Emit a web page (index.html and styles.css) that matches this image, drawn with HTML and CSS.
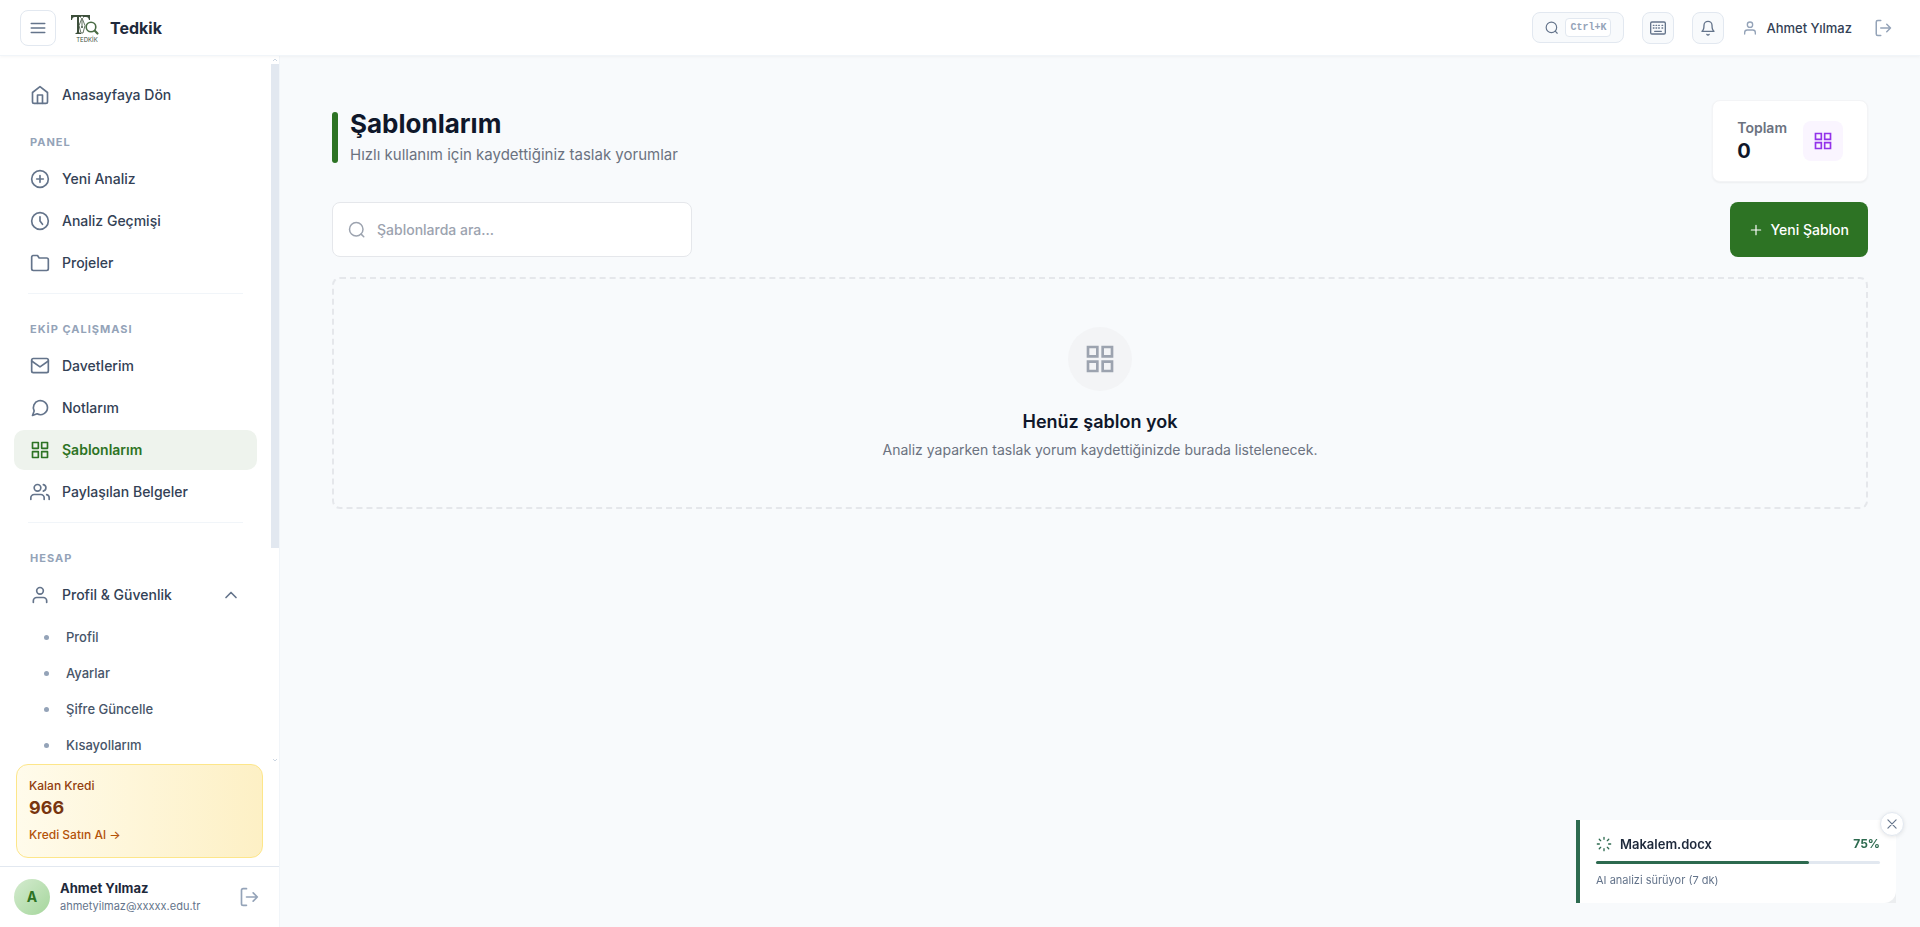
FILE: index.html
```html
<!DOCTYPE html>
<html lang="tr">
<head>
    <meta charset="UTF-8">
    <meta name="viewport" content="width=device-width, initial-scale=1.0">
    <title>Şablonlarım - Tedkik</title>
    <link rel="stylesheet" href="styles.css">
</head>
<body>
    <!-- Shared icons -->
    <svg class="sprite" aria-hidden="true">
        <symbol id="i-grid" viewBox="0 0 24 24"><path d="M3 3h7v7H3zM14 3h7v7h-7zM14 14h7v7h-7zM3 14h7v7H3z"/></symbol>
        <symbol id="i-user" viewBox="0 0 24 24"><path d="M20 21v-2a4 4 0 0 0-4-4H8a4 4 0 0 0-4 4v2"/><circle cx="12" cy="7" r="4"/></symbol>
        <symbol id="i-search" viewBox="0 0 24 24"><circle cx="11" cy="11" r="9"/><path d="m21 21-3.500-3.500"/></symbol>
        <symbol id="i-logout" viewBox="0 0 24 24"><path d="M9 22H5a2 2 0 0 1-2-2V4a2 2 0 0 1 2-2h4M17 17l5-5-5-5M22 12H9"/></symbol>
    </svg>

    <header class="topbar">
        <button class="menu-btn" aria-label="Menü">
            <svg class="icon" width="18" height="18" viewBox="0 0 24 24"><path d="M3 6h18M3 12h18M3 18h18"/></svg>
        </button>
        <a class="brand" href="#">
            <svg class="logo" width="30" height="30" viewBox="0 0 30 30" aria-hidden="true">
                <path fill="#3d4f3b" d="M1 2h19v5h-1c-.4-2-1-3-3-3h-2v1l-2-2-2 2V4h-1v14c0 1.500.6 2 2 2v1H5.500v-1C7 20 7 19.500 7 18V4H5C3 4 2.400 5 2 7H1z"/>
                <path fill="#fff" stroke="#3d4f3b" stroke-width=".8" d="m12 5 3 7.500-2 7.500h-2l-2-7.500z"/>
                <path stroke="#3d4f3b" stroke-width=".8" d="M12 7v6"/>
                <circle cx="12" cy="14" r="1" fill="#3d4f3b"/>
                <circle cx="21" cy="14" r="4.800" fill="none" stroke="#4a6b45" stroke-width="1.600"/>
                <path stroke="#4a6b45" stroke-width="2.200" stroke-linecap="round" d="m24.800 17.800 2.700 2.700"/>
                <text x="17" y="28.500" text-anchor="middle" font-family="Inter, sans-serif" font-size="6" fill="#3d4f3b">TEDKİK</text>
            </svg>
            <span class="brand-name">Tedkik</span>
        </a>
        <div class="topbar-actions">
            <button class="search-btn" aria-label="Ara">
                <svg class="icon" width="14" height="14"><use href="#i-search"/></svg>
                <kbd>Ctrl+K</kbd>
            </button>
            <button class="icon-btn" aria-label="Klavye kısayolları">
                <svg class="icon" width="16" height="16" viewBox="0 0 24 24"><rect x="1" y="3" width="22" height="18" rx="2"/><path d="M5 8h1M9 8h1M13 8h1M18 8h1M5 12h1M9 12h1M13 12h1M18 12h1M7 17h10"/></svg>
            </button>
            <button class="icon-btn" aria-label="Bildirimler">
                <svg class="icon" width="16" height="16" viewBox="0 0 24 24"><path d="M18 8A6 6 0 0 0 6 8c0 7-3 9-3 9h18s-3-2-3-9M13.700 21.500a2 2 0 0 1-3.400 0"/></svg>
            </button>
            <a class="user-link" href="#">
                <svg class="icon" width="16" height="16"><use href="#i-user"/></svg>
                Ahmet Yılmaz
            </a>
            <button class="plain-btn" aria-label="Çıkış yap">
                <svg class="icon" width="18" height="18"><use href="#i-logout"/></svg>
            </button>
        </div>
    </header>

    <div class="layout">
        <aside class="sidebar">
            <div class="sidebar-scroll">
                <nav class="nav">
                    <a class="nav-item" href="#">
                        <svg class="icon" width="20" height="20" viewBox="0 0 24 24"><path d="m3 9 9-7 9 7v11a2 2 0 0 1-2 2H5a2 2 0 0 1-2-2z"/><path d="M9 22V12h6v10"/></svg>
                        Anasayfaya Dön
                    </a>

                    <h2 class="nav-title">PANEL</h2>
                    <a class="nav-item" href="#">
                        <svg class="icon" width="20" height="20" viewBox="0 0 24 24"><circle cx="12" cy="12" r="10"/><path d="M12 8v8M8 12h8"/></svg>
                        Yeni Analiz
                    </a>
                    <a class="nav-item" href="#">
                        <svg class="icon" width="20" height="20" viewBox="0 0 24 24"><circle cx="12" cy="12" r="10"/><path d="M12 7v5l3 4"/></svg>
                        Analiz Geçmişi
                    </a>
                    <a class="nav-item" href="#">
                        <svg class="icon" width="20" height="20" viewBox="0 0 24 24"><path d="M22 19a2 2 0 0 1-2 2H4a2 2 0 0 1-2-2V5a2 2 0 0 1 2-2h5l2 3h9a2 2 0 0 1 2 2z"/></svg>
                        Projeler
                    </a>
                    <hr class="nav-divider">

                    <h2 class="nav-title">EKİP ÇALIŞMASI</h2>
                    <a class="nav-item" href="#">
                        <svg class="icon" width="20" height="20" viewBox="0 0 24 24"><rect x="2" y="3" width="20" height="17" rx="2"/><path d="m2 6 10 7 10-7"/></svg>
                        Davetlerim
                    </a>
                    <a class="nav-item" href="#">
                        <svg class="icon" width="20" height="20" viewBox="0 0 24 24"><path d="M21 11.500a8.500 8.500 0 0 1-12.500 7.500L3 21l2-5.400A8.500 8.500 0 1 1 21 11.500z"/></svg>
                        Notlarım
                    </a>
                    <a class="nav-item active" href="#" aria-current="page">
                        <svg class="icon" width="20" height="20"><use href="#i-grid"/></svg>
                        Şablonlarım
                    </a>
                    <a class="nav-item" href="#">
                        <svg class="icon" width="20" height="20" viewBox="0 0 24 24"><path d="M17 21v-2a4 4 0 0 0-4-4H5a4 4 0 0 0-4 4v2"/><circle cx="9" cy="7" r="4"/><path d="M23 21v-2a4 4 0 0 0-3-3.900M16 3.100a4 4 0 0 1 0 7.800"/></svg>
                        Paylaşılan Belgeler
                    </a>
                    <hr class="nav-divider">

                    <h2 class="nav-title">HESAP</h2>
                    <button class="nav-item" aria-expanded="true">
                        <svg class="icon" width="20" height="20"><use href="#i-user"/></svg>
                        Profil &amp; Güvenlik
                        <svg class="icon chevron" width="20" height="20" viewBox="0 0 24 24"><path d="m6 15 6-6 6 6"/></svg>
                    </button>
                    <div class="subnav">
                        <a href="#">Profil</a>
                        <a href="#">Ayarlar</a>
                        <a href="#">Şifre Güncelle</a>
                        <a href="#">Kısayollarım</a>
                    </div>
                </nav>
                <div class="rail" aria-hidden="true">
                    <svg width="8" height="8" viewBox="0 0 8 8"><path d="m2 5 2-2 2 2"/></svg>
                    <div class="rail-track"><div class="rail-thumb"></div></div>
                    <svg width="8" height="8" viewBox="0 0 8 8"><path d="m2 3 2 2 2-2"/></svg>
                </div>
            </div>

            <div class="credit-card">
                <span class="credit-label">Kalan Kredi</span>
                <strong class="credit-value">966</strong>
                <a class="credit-link" href="#">Kredi Satın Al →</a>
            </div>

            <div class="profile">
                <div class="avatar">A</div>
                <div class="profile-text">
                    <span class="profile-name">Ahmet Yılmaz</span>
                    <span class="profile-mail">ahmetyilmaz@xxxxx.edu.tr</span>
                </div>
                <button class="plain-btn" aria-label="Çıkış yap">
                    <svg class="icon" width="20" height="20"><use href="#i-logout"/></svg>
                </button>
            </div>
        </aside>

        <main class="content">
            <div class="page-head">
                <div class="page-title">
                    <h1>Şablonlarım</h1>
                    <p>Hızlı kullanım için kaydettiğiniz taslak yorumlar</p>
                </div>
                <div class="stat-card">
                    <div>
                        <div class="stat-label">Toplam</div>
                        <div class="stat-value">0</div>
                    </div>
                    <div class="stat-icon">
                        <svg class="icon sharp" width="20" height="20"><use href="#i-grid"/></svg>
                    </div>
                </div>
            </div>

            <div class="toolbar">
                <label class="search-box">
                    <svg class="icon" width="18" height="18"><use href="#i-search"/></svg>
                    <input type="text" placeholder="Şablonlarda ara..." aria-label="Şablonlarda ara">
                </label>
                <button class="new-btn">
                    <svg class="icon" width="14" height="14" viewBox="0 0 24 24"><path d="M12 4v16M4 12h16"/></svg>
                    Yeni Şablon
                </button>
            </div>

            <section class="empty">
                <div class="empty-icon">
                    <svg class="icon sharp" width="32" height="32"><use href="#i-grid"/></svg>
                </div>
                <h3>Henüz şablon yok</h3>
                <p>Analiz yaparken taslak yorum kaydettiğinizde burada listelenecek.</p>
            </section>
        </main>
    </div>

    <div class="toast" role="status">
        <button class="toast-close" aria-label="Kapat">
            <svg class="icon" width="14" height="14" viewBox="0 0 24 24"><path d="m5 5 14 14M19 5 5 19"/></svg>
        </button>
        <div class="toast-body">
            <div class="toast-head">
                <svg class="icon" width="16" height="16" viewBox="0 0 24 24"><path d="M12 2v3M12 19v3M2 12h3M19 12h3M4.900 4.900 7 7M17 17l2.100 2.100M4.900 19.100 7 17M17 7l2.100-2.100"/></svg>
                <span class="toast-file">Makalem.docx</span>
                <span class="toast-percent">75%</span>
            </div>
            <div class="progress"><div class="progress-bar" style="width: 75%"></div></div>
            <p>AI analizi sürüyor (7 dk)</p>
        </div>
    </div>
</body>
</html>
```
FILE: styles.css
```css
* {
    box-sizing: border-box;
    margin: 0;
    padding: 0;
}

body {
    display: flex;
    flex-direction: column;
    height: 100vh;
    overflow: hidden;
    font-family: Inter, "Liberation Sans", sans-serif;
    font-size: 14px;
    line-height: 20px;
    color: #334155;
    background-color: #f8fafc;
}

a {
    color: inherit;
    text-decoration: none;
}

button {
    font: inherit;
    color: inherit;
    background: none;
    border: none;
    cursor: pointer;
}

.sprite {
    position: absolute;
    width: 0;
    height: 0;
}

.icon {
    display: block;
    flex-shrink: 0;
    fill: none;
    stroke: currentColor;
    stroke-width: 2;
    stroke-linecap: round;
    stroke-linejoin: round;
}

.icon.sharp {
    stroke-linecap: butt;
    stroke-linejoin: miter;
}

/* Top bar */
.topbar {
    display: flex;
    align-items: center;
    flex-shrink: 0;
    height: 56px;
    padding: 0 20px;
    background-color: #fff;
    border-bottom: 1px solid #f1f5f9;
    box-shadow: 0 1px 3px rgba(0, 0, 0, 0.04);
    z-index: 2;
}

.menu-btn {
    display: grid;
    place-items: center;
    width: 36px;
    height: 36px;
    color: #64748b;
    border: 1px solid #e2e8f0;
    border-radius: 8px;
}

.brand {
    display: flex;
    align-items: center;
    gap: 10px;
    margin-left: 14px;
}

.logo {
    fill: none;
}

.brand-name {
    font-size: 16px;
    font-weight: 700;
    color: #1e293b;
}

.topbar-actions {
    display: flex;
    align-items: center;
    gap: 18px;
    margin-left: auto;
    padding-right: 8px;
}

.search-btn {
    display: flex;
    align-items: center;
    gap: 6px;
    height: 31px;
    padding: 0 12px;
    color: #64748b;
    background-color: #f8fafc;
    border: 1px solid #e2e8f0;
    border-radius: 8px;
}

kbd {
    padding: 0 4px;
    font-family: "Liberation Mono", monospace;
    font-size: 10px;
    font-weight: 700;
    line-height: 17px;
    color: #94a3b8;
    background-color: #fff;
    border: 1px solid #e2e8f0;
    border-radius: 4px;
}

.icon-btn {
    display: grid;
    place-items: center;
    width: 32px;
    height: 32px;
    color: #64748b;
    background-color: #f8fafc;
    border: 1px solid #e2e8f0;
    border-radius: 8px;
}

.user-link {
    display: flex;
    align-items: center;
    gap: 8px;
    font-size: 13px;
    font-weight: 500;
}

.user-link .icon,
.plain-btn {
    color: #94a3b8;
}

.user-link + .plain-btn {
    margin-left: 4px;
}

/* Sidebar */
.layout {
    display: flex;
    flex: 1;
    min-height: 0;
}

.sidebar {
    display: flex;
    flex-direction: column;
    flex-shrink: 0;
    width: 280px;
    background-color: #fff;
    border-right: 1px solid #f1f5f9;
}

.sidebar-scroll {
    display: flex;
    flex: 1;
    min-height: 0;
}

.nav {
    display: flex;
    flex-direction: column;
    flex: 1;
    gap: 2px;
    padding: 19px 14px 0;
    overflow: hidden;
}

.nav-item {
    display: flex;
    align-items: center;
    flex-shrink: 0;
    gap: 12px;
    height: 40px;
    padding: 0 16px;
    font-weight: 500;
    border-radius: 10px;
}

.nav-item .icon {
    color: #64748b;
}

.nav-item.active,
.nav-item.active .icon {
    color: #2d7324;
}

.nav-item.active {
    font-weight: 600;
    background-color: #eef3ed;
}

.nav-item .chevron {
    margin-left: auto;
}

.nav-title {
    flex-shrink: 0;
    padding: 16px 16px 6px;
    font-size: 11px;
    font-weight: 700;
    line-height: 18px;
    letter-spacing: 1px;
    color: #94a3b8;
}

.nav-divider {
    flex-shrink: 0;
    margin: 8px 14px;
    border: none;
    border-top: 1px solid #f1f5f9;
}

.subnav {
    display: flex;
    flex-direction: column;
    flex-shrink: 0;
    padding: 2px 0 0 30px;
}

.subnav a {
    display: flex;
    align-items: center;
    gap: 17px;
    height: 36px;
    font-size: 13px;
    font-weight: 500;
    color: #475569;
}

.subnav a::before {
    content: "";
    width: 5px;
    height: 5px;
    background-color: #94a3b8;
    border-radius: 50%;
}

.rail {
    display: flex;
    flex-direction: column;
    width: 8px;
}

.rail svg {
    fill: none;
    stroke: #cbd5e1;
}

.rail-track {
    flex: 1;
}

.rail-thumb {
    height: 70%;
    background-color: #e2e8f0;
}

.credit-card {
    display: flex;
    flex-direction: column;
    margin: 0 16px 8px;
    padding: 12px;
    font-size: 12px;
    font-weight: 500;
    background: linear-gradient(90deg, #fffbeb, #fdf0c5);
    border: 1px solid #fde68a;
    border-radius: 12px;
}

.credit-label {
    line-height: 18px;
    color: #92400e;
}

.credit-value {
    font-size: 18px;
    font-weight: 700;
    line-height: 26px;
    color: #78350f;
}

.credit-link {
    margin-top: 4px;
    color: #b45309;
}

.profile {
    display: flex;
    align-items: center;
    gap: 10px;
    height: 61px;
    padding: 0 20px 0 14px;
    border-top: 1px solid #e2e8f0;
}

.avatar {
    display: grid;
    place-items: center;
    width: 36px;
    height: 36px;
    font-weight: 700;
    color: #2d7324;
    background: linear-gradient(135deg, #d4ebcf, #a5d69c);
    border-radius: 50%;
}

.profile-text {
    display: flex;
    flex-direction: column;
    flex: 1;
}

.profile-name {
    font-size: 13px;
    font-weight: 700;
    line-height: 18px;
    color: #1e293b;
}

.profile-mail {
    font-size: 11px;
    line-height: 18px;
    color: #64748b;
}

/* Content */
.content {
    display: flex;
    flex-direction: column;
    flex: 1;
    gap: 20px;
    padding: 44px 52px;
    overflow: hidden;
}

.page-head,
.toolbar {
    display: flex;
    align-items: center;
    justify-content: space-between;
}

.page-title {
    position: relative;
    padding: 0 0 8px 18px;
}

/* Green accent bar */
.page-title::before {
    content: "";
    position: absolute;
    left: 0;
    top: 4px;
    bottom: 12px;
    width: 6px;
    background-color: #2d7324;
    border-radius: 3px;
}

h1 {
    margin-bottom: 3px;
    font-size: 26px;
    font-weight: 700;
    line-height: 32px;
    color: #0f172a;
}

.page-title p {
    font-size: 15px;
    line-height: 24px;
    color: #6b7280;
}

.stat-card {
    display: flex;
    align-items: center;
    gap: 16px;
    height: 82px;
    padding: 0 24px;
    background-color: #fff;
    border: 1px solid #f3f4f6;
    border-radius: 8px;
    box-shadow: 0 1px 2px rgba(0, 0, 0, 0.05);
}

.stat-label {
    font-weight: 600;
    color: #6b7280;
}

.stat-value {
    font-size: 20px;
    font-weight: 700;
    line-height: 26px;
    color: #0f172a;
}

.stat-icon {
    display: grid;
    place-items: center;
    width: 40px;
    height: 40px;
    color: #9333ea;
    background-color: #faf5ff;
    border-radius: 8px;
}

.search-box {
    display: flex;
    align-items: center;
    gap: 11px;
    width: 360px;
    height: 55px;
    padding: 0 15px;
    color: #9ca3af;
    background-color: #fff;
    border: 1px solid #e5e7eb;
    border-radius: 8px;
}

.search-box input {
    flex: 1;
    min-width: 0;
    font: inherit;
    font-weight: 500;
    color: #0f172a;
    background: none;
    border: none;
    outline: none;
}

.search-box input::placeholder {
    color: #9ca3af;
}

.new-btn {
    display: flex;
    align-items: center;
    gap: 8px;
    height: 55px;
    padding: 0 19px;
    font-weight: 500;
    color: #fff;
    background-color: #2d7324;
    border-radius: 8px;
}

.empty {
    display: flex;
    flex-direction: column;
    align-items: center;
    padding: 48px 48px 47px;
    text-align: center;
    border: 2px dashed #e5e7eb;
    border-radius: 8px;
}

.empty-icon {
    display: grid;
    place-items: center;
    width: 64px;
    height: 64px;
    margin-bottom: 17px;
    color: #9ca3af;
    background-color: #f3f4f6;
    border-radius: 50%;
}

.empty h3 {
    margin-bottom: 4px;
    font-size: 18px;
    font-weight: 600;
    line-height: 28px;
    color: #0f172a;
}

.empty p {
    color: #6b7280;
}

/* Analysis progress toast */
.toast {
    position: fixed;
    right: 24px;
    bottom: 24px;
    width: 320px;
    background-color: #eceef0;
}

.toast-body {
    padding: 14px 16px;
    background-color: #fff;
    border-left: 4px solid #2d6a4f;
    border-radius: 0 0 12px 0;
}

.toast-head {
    display: flex;
    align-items: center;
    gap: 8px;
    margin-bottom: 7px;
    font-size: 13px;
    font-weight: 600;
    color: #1e293b;
}

.toast-head .icon,
.toast-percent {
    color: #2d6a4f;
}

.toast-percent {
    margin-left: auto;
    font-size: 12px;
    font-weight: 700;
}

.progress {
    height: 3px;
    margin-bottom: 7px;
    background-color: #e2e8f0;
    border-radius: 2px;
}

.progress-bar {
    height: 100%;
    background-color: #2d6a4f;
    border-radius: 2px;
}

.toast p {
    font-size: 11px;
    line-height: 18px;
    color: #64748b;
}

.toast-close {
    position: absolute;
    top: -8px;
    right: -8px;
    display: grid;
    place-items: center;
    width: 24px;
    height: 24px;
    color: #64748b;
    background-color: #fff;
    border: 1px solid #e2e8f0;
    border-radius: 50%;
    box-shadow: 0 1px 4px rgba(0, 0, 0, 0.1);
}
```
